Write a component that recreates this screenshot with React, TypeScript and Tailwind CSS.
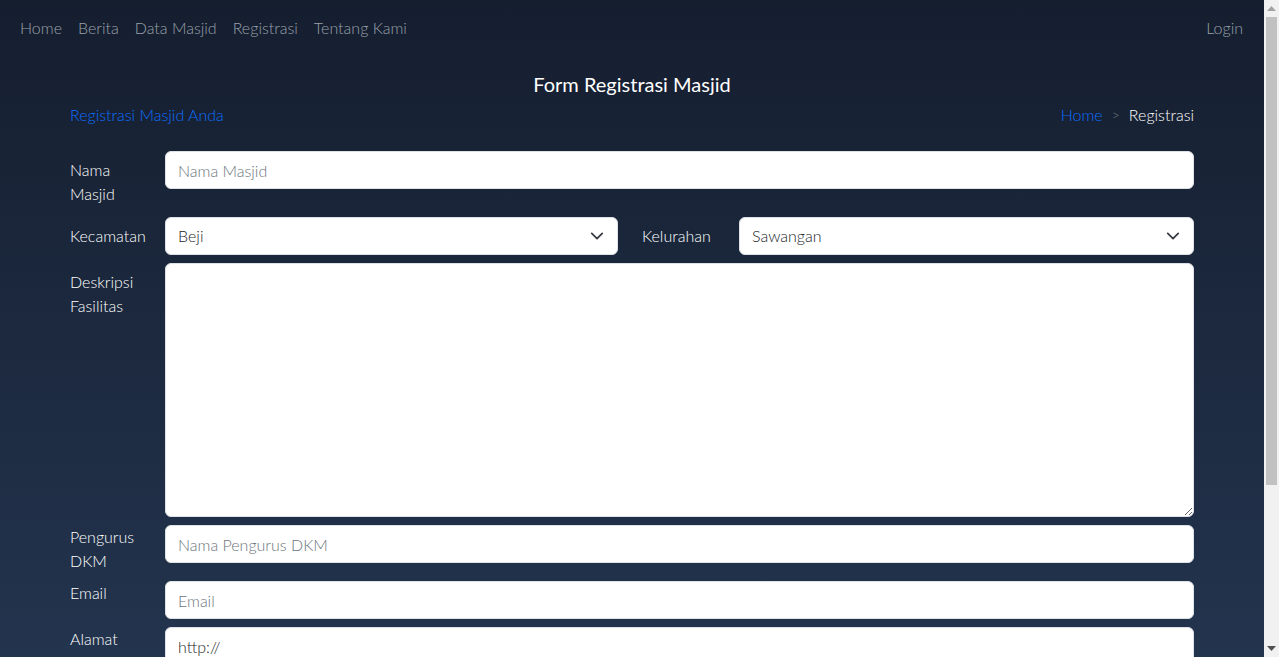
import React from "react";

const Chevron = () => (
  <svg className="pointer-events-none absolute right-[14px] top-1/2 -translate-y-1/2" width="14" height="14" viewBox="0 0 16 16" fill="none">
    <path d="M2 5l6 6 6-6" stroke="#343a40" strokeWidth="2" strokeLinecap="round" strokeLinejoin="round" />
  </svg>
);

const inputCls =
  "w-full h-[38px] rounded-[6px] border border-[#dee2e6] bg-white px-3 text-[16px] font-light text-[#212529] placeholder:text-[#6c757d] outline-none";

const Select = ({ value, className }: { value: string; className?: string }) => (
  <div className={"relative " + (className ?? "")}>
    <select className={inputCls + " appearance-none"} defaultValue={value}>
      <option>{value}</option>
    </select>
    <Chevron />
  </div>
);

// window scrollbar strip
const Scrollbar = () => (
  <div className="flex w-[15px] shrink-0 flex-col items-center bg-[#f1f1f1]">
    <div className="flex h-[17px] w-full items-center justify-center">
      <svg width="9" height="5" viewBox="0 0 9 5"><path d="M4.5 0L9 5H0z" fill="#a3a3a3" /></svg>
    </div>
    <div className="h-[468px] w-[11px] bg-[#c1c1c1]" />
    <div className="flex-1" />
    <div className="flex h-[17px] w-full items-center justify-center">
      <svg width="9" height="5" viewBox="0 0 9 5"><path d="M0 0h9L4.5 5z" fill="#505050" /></svg>
    </div>
  </div>
);

const App = () => {
  return (
    <div className="flex h-screen overflow-hidden" style={{ fontFamily: "Lato, 'Open Sans', sans-serif" }}>
      <div className="flex-1 overflow-hidden bg-gradient-to-b from-[#151e2f] to-[#23344e] text-white">
        <nav className="flex h-[55px] items-center justify-between pl-5 pr-[21px] text-[16px] font-light text-[#9aa1ab]">
          <ul className="flex gap-4">
            <li>Home</li>
            <li>Berita</li>
            <li>Data Masjid</li>
            <li>Registrasi</li>
            <li>Tentang Kami</li>
          </ul>
          <span>Login</span>
        </nav>

        <div className="mx-auto w-[1124px] pb-[120px]">
          <h1 className="mt-[16px] text-center text-[20px] font-normal leading-[26px]">Form Registrasi Masjid</h1>
          <div className="mt-[6px] flex items-center justify-between text-[16px] font-light leading-[24px]">
            <span className="text-[#0d6efd]">Registrasi Masjid Anda</span>
            <div className="flex items-center gap-[9px]">
              <span className="text-[#0d6efd]">Home</span>
              <span className="text-[#6c757d] text-[14px]">&gt;</span>
              <span>Registrasi</span>
            </div>
          </div>

          <form className="mt-[24px] text-[16px] font-light leading-[24px]">
            <div className="mb-2 flex">
              <label className="w-[95px] pt-[7px] pb-[3px]">Nama<br />Masjid</label>
              <input className={inputCls + " flex-1"} placeholder="Nama Masjid" />
            </div>

            <div className="mb-2 flex">
              <label className="w-[95px] pt-[7px]">Kecamatan</label>
              <Select value="Beji" className="w-[453px]" />
              <label className="w-[121px] pl-[24px] pt-[7px]">Kelurahan</label>
              <Select value="Sawangan" className="flex-1" />
            </div>

            <div className="mb-2 flex">
              <label className="w-[95px] pt-[7px]">Deskripsi<br />Fasilitas</label>
              <textarea className="h-[254px] flex-1 rounded-[6px] border border-[#dee2e6] bg-white px-3 py-[6px] text-[#212529] outline-none" />
            </div>

            <div className="mb-2 flex">
              <label className="w-[95px]">Pengurus<br />DKM</label>
              <input className={inputCls + " flex-1"} placeholder="Nama Pengurus DKM" />
            </div>

            <div className="mb-2 flex">
              <label className="w-[95px]">Email</label>
              <input className={inputCls + " flex-1"} placeholder="Email" />
            </div>

            <div className="mb-2 flex">
              <label className="w-[95px]">Alamat<br />Website</label>
              <input className={inputCls + " flex-1 text-[#555]"} defaultValue="http://" />
            </div>

            <div className="mb-2 flex">
              <label className="w-[95px]">Telepon</label>
              <input className={inputCls + " flex-1"} placeholder="Nomor Telepon" />
            </div>

            <div className="mt-4 flex justify-end">
              <button type="button" className="rounded-[6px] bg-[#0d6efd] px-3 py-[6px] text-white">Daftar</button>
            </div>
          </form>
        </div>
      </div>
      <Scrollbar />
    </div>
  );
};

export default App;
